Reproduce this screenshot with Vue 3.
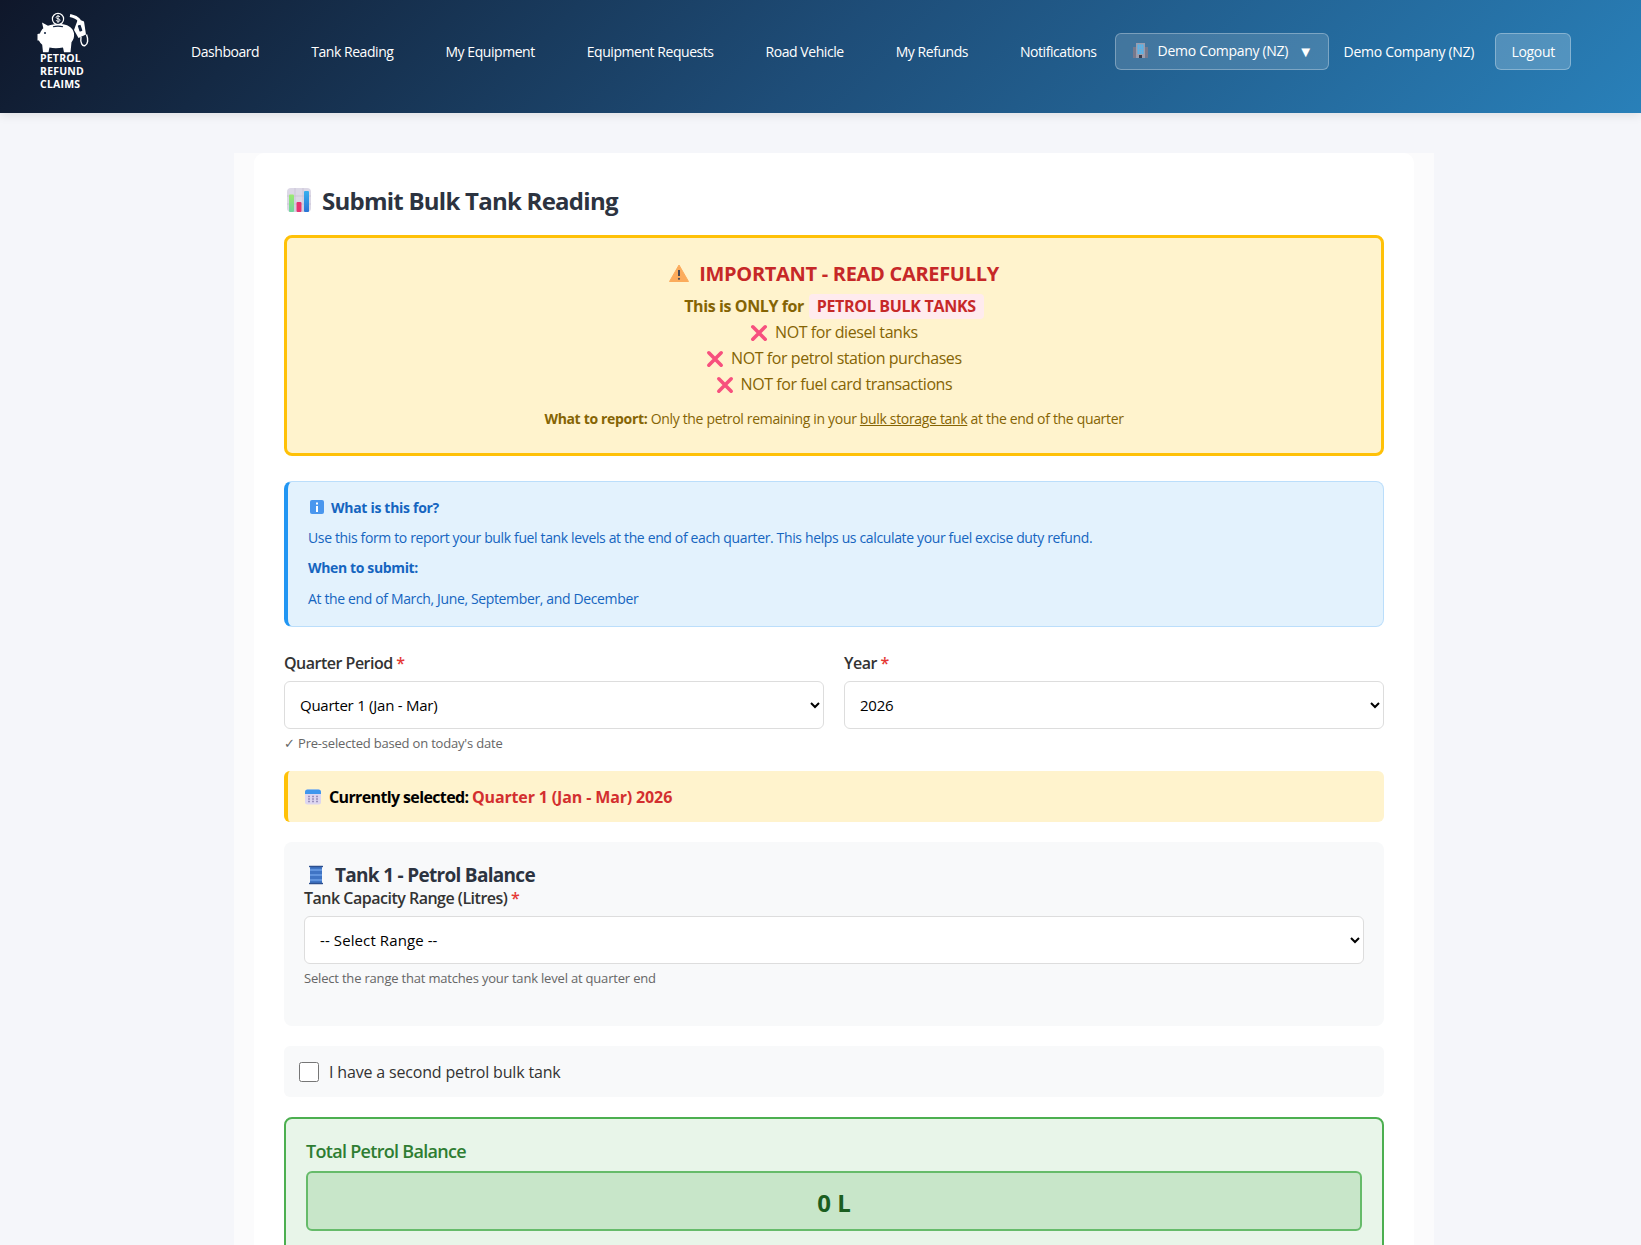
<script setup>
const navLinks = ['Dashboard', 'Tank Reading', 'My Equipment', 'Equipment Requests', 'Road Vehicle', 'My Refunds', 'Notifications'];
const notFor = ['NOT for diesel tanks', 'NOT for petrol station purchases', 'NOT for fuel card transactions'];
</script>

<template>
  <div class="page">
    <header class="topbar">
      <div class="brand">
        <svg class="logo" viewBox="0 0 52 42" width="52" height="42">
          <circle cx="21" cy="8" r="5.600" fill="none" stroke="#fff" stroke-width="1.200" />
          <path d="M23 5.800c-.7-1-3.900-1.100-3.900.6 0 1.900 4 .9 4 2.800 0 1.600-3.400 1.500-4.200-.2M21 3.900v8.200" fill="none" stroke="#fff" stroke-width=".9" />
          <path d="M5 11.500l6 3.300c4-1.600 10-2.200 15-1.600 6 .8 10 4 11 9 .5 3.500-.5 6.500-2.500 9l-1 10h-6.500l-1-4.600c-5 1-9.500 1-13.500 0l-1 4.600H6l-.8-7.400c-1.500-1.200-2.600-2.600-3.300-4.300H.5v-6.500l2.500-.5c.5-2 1.800-3.800 3.300-5.200z" fill="#fff" />
          <path d="M16 15.800c3-.8 7-.8 10 0" fill="none" stroke="#12233f" stroke-width="1.100" />
          <circle cx="8" cy="22" r="1" fill="#12233f" />
          <path d="M33 4.500c4 .8 7.500 2.500 9.500 5" fill="none" stroke="#fff" stroke-width="3" />
          <path d="M41 8l6 2.500 2 13-7.500 3.500-4.500-8z" fill="#fff" />
          <rect x="41.500" y="14" width="3" height="6.500" rx=".8" fill="#12233f" transform="rotate(-18 43 17)" />
          <path d="M44 26c-1 6 1.500 9.500 4 8.500 3-1.200 3.500-6 1.500-11" fill="none" stroke="#fff" stroke-width="1.400" />
        </svg>
        <div class="brand-text">PETROL<br />REFUND<br />CLAIMS</div>
      </div>
      <nav class="nav">
        <a v-for="link in navLinks" :key="link" class="nav-link">{{ link }}</a>
      </nav>
      <button class="company-btn">
        <svg class="office" viewBox="0 0 15 15" width="15" height="15">
          <rect x="0" y="4" width="15" height="11" fill="#77798c" />
          <rect x="3" y="0" width="9" height="15" fill="#9b9dae" />
          <rect x="4.500" y="1.500" width="6" height="9.500" fill="#4fb6ee" />
          <path d="M4.500 4h6M4.500 6.500h6M4.500 9h6M6.500 1.500V11M8.500 1.500V11" stroke="#8fa3c0" stroke-width=".5" />
          <rect x="6" y="12" width="3" height="3" fill="#3a3d4d" />
        </svg>
        <span class="company-label">Demo Company (NZ)</span>
        <span class="caret">▼</span>
      </button>
      <span class="company-name">Demo Company (NZ)</span>
      <button class="logout">Logout</button>
    </header>

    <main class="main">
      <div class="shell">
        <div class="card">
          <h1 class="title">
            <svg viewBox="0 0 24 24" width="24" height="24">
              <defs>
                <linearGradient id="barGreen" x1="0" y1="0" x2="0" y2="1"><stop offset="0" stop-color="#9bea6f" /><stop offset="1" stop-color="#6fd6a0" /></linearGradient>
                <linearGradient id="barBlue" x1="0" y1="0" x2="0" y2="1"><stop offset="0" stop-color="#35b0ee" /><stop offset="1" stop-color="#2a74d6" /></linearGradient>
              </defs>
              <rect width="24" height="24" rx="4" fill="#dcd8e6" />
              <path d="M8 0v24M16 0v24M0 8h24M0 16h24" stroke="#c4bed0" stroke-width=".6" />
              <rect x="2" y="6.500" width="5" height="17.500" rx="1" fill="url(#barGreen)" />
              <rect x="9.500" y="14" width="5" height="10" rx="1" fill="#e7336f" />
              <rect x="17" y="3" width="5" height="21" rx="1" fill="url(#barBlue)" />
            </svg>
            Submit Bulk Tank Reading
          </h1>

          <section class="warn">
            <h2 class="warn-title">
              <svg viewBox="0 0 20 18" width="20" height="18">
                <path d="M10 1L19.500 17.500H.5z" fill="#fbab5c" stroke="#fbab5c" stroke-linejoin="round" />
                <path d="M10 6v6" stroke="#4a4a55" stroke-width="2" />
                <circle cx="10" cy="14.800" r="1.100" fill="#4a4a55" />
              </svg>
              IMPORTANT - READ CAREFULLY
            </h2>
            <p class="warn-only">This is ONLY for <span class="tag">PETROL BULK TANKS</span></p>
            <p v-for="line in notFor" :key="line" class="warn-line">
              <svg viewBox="0 0 16 16" width="18" height="18">
                <path d="M2.500 2.500l11 11M13.500 2.500l-11 11" stroke="#f7507e" stroke-width="3.200" stroke-linecap="round" />
              </svg>
              {{ line }}
            </p>
            <p class="warn-report"><strong>What to report:</strong> Only the petrol remaining in your <u>bulk storage tank</u> at the end of the quarter</p>
          </section>

          <section class="info">
            <h3 class="info-title">
              <svg viewBox="0 0 14 14" width="14" height="14">
                <rect width="14" height="14" rx="2" fill="#4a97ee" />
                <rect x="6" y="6" width="2" height="6" fill="#fff" />
                <rect x="6" y="2.500" width="2" height="2" fill="#fff" />
              </svg>
              What is this for?
            </h3>
            <p>Use this form to report your bulk fuel tank levels at the end of each quarter. This helps us calculate your fuel excise duty refund.</p>
            <p><strong>When to submit:</strong></p>
            <p>At the end of March, June, September, and December</p>
          </section>

          <div class="row">
            <div class="field">
              <label class="label">Quarter Period <span class="req">*</span></label>
              <select class="select">
                <option>Quarter 1 (Jan - Mar)</option>
              </select>
              <small class="hint">✓ Pre-selected based on today's date</small>
            </div>
            <div class="field">
              <label class="label">Year <span class="req">*</span></label>
              <select class="select">
                <option>2026</option>
              </select>
            </div>
          </div>

          <div class="selected">
            <svg viewBox="0 0 16 16" width="16" height="16">
              <rect y="0.500" width="16" height="15" rx="2.500" fill="#ddd6f0" />
              <path d="M0 5V3a2.500 2.500 0 0 1 2.500-2.500h11A2.500 2.500 0 0 1 16 3v2z" fill="#3f97ee" />
              <path d="M3 7.500h2M7 7.500h2M11 7.500h2M3 10h2M7 10h2M11 10h2M3 12.500h2M7 12.500h2M11 12.500h2" stroke="#9a90bd" stroke-width="1.300" />
            </svg>
            <strong>Currently selected: <span class="selected-value">Quarter 1 (Jan - Mar) 2026</span></strong>
          </div>

          <section class="tank">
            <h3 class="tank-title">
              <svg viewBox="0 0 14 20" width="14" height="20">
                <rect x="1" y="1" width="12" height="18" rx="1.500" fill="#3f74c4" />
                <path d="M1 5h12M1 10h12M1 15h12" stroke="#6c9fe6" stroke-width="1.400" />
                <path d="M.5 1.500h13M.5 18.500h13" stroke="#2c4f8f" stroke-width="1.400" stroke-linecap="round" />
              </svg>
              Tank 1 - Petrol Balance
            </h3>
            <label class="label tank-label">Tank Capacity Range (Litres) <span class="req">*</span></label>
            <select class="select range">
              <option>-- Select Range --</option>
            </select>
            <small class="hint">Select the range that matches your tank level at quarter end</small>
          </section>

          <label class="second">
            <input type="checkbox" class="check" />
            <span>I have a second petrol bulk tank</span>
          </label>

          <section class="total">
            <div class="total-label">Total Petrol Balance</div>
            <div class="total-value">0 L</div>
          </section>
        </div>
      </div>
    </main>
  </div>
</template>

<style>
html, body { margin: 0; background: #f5f6fa; }
</style>

<style scoped>
* { box-sizing: border-box; }
.page {
  height: 100vh; overflow: hidden; background: #f5f6fa;
  font-family: "Open Sans", "Noto Sans", sans-serif; color: #333;
}
.topbar {
  height: 113px; display: flex; align-items: center; padding: 0 70px 10px 37px;
  background: linear-gradient(135deg, #0f172a 0%, #1e4d78 50%, #2980b9 100%);
  box-shadow: 0 2px 10px rgba(0,0,0,.1); color: #fff;
}
.brand { width: 154px; flex-shrink: 0; margin-bottom: 2px; }
.logo { display: block; }
.brand-text { font-size: 10.500px; font-weight: 700; line-height: 13px; margin: -1px 0 0 3px; letter-spacing: .2px; }
.nav { display: flex; gap: 52px; font-size: 14px; letter-spacing: -.45px; }
.nav-link { white-space: nowrap; }
.company-btn {
  margin-left: 18px; height: 37px; width: 214px; display: flex; align-items: center; gap: 10px; flex-shrink: 0;
  padding: 0 0 2px 17px; border: 1px solid rgba(255,255,255,.3); border-radius: 6px;
  background: rgba(255,255,255,.15); color: #fff; font: inherit; font-size: 14px; letter-spacing: -.3px;
}
.company-label { white-space: nowrap; }
.office { flex-shrink: 0; }
.caret { font-size: 15px; }
.company-name { margin-left: 15px; font-size: 14px; letter-spacing: -.3px; white-space: nowrap; }
.logout {
  margin-left: 21px; height: 37px; width: 76px; padding: 0; border: 1px solid rgba(255,255,255,.3); flex-shrink: 0;
  border-radius: 6px; background: rgba(255,255,255,.2); color: #fff; font: inherit; font-size: 14px; letter-spacing: -.3px;
}
.main { padding-top: 40px; }
.shell { width: 1200px; margin-left: 234px; padding: 0 20px; background: #fbfbfc; }
.card {
  height: 1400px; padding: 30px; background: #fff; border-radius: 10px;
}
.title { display: flex; align-items: center; gap: 11px; margin: 0 0 18px 3px; height: 34px; font-size: 24px; font-weight: 700; letter-spacing: -.75px; color: #2c3340; }
.warn {
  height: 221px; padding: 21px 20px 20px; text-align: center; background: #fff3cd;
  border: 3px solid #ffc107; border-radius: 8px; color: #856404; font-size: 16px;
}
.warn p { margin: 0; }
.warn-title {
  display: flex; justify-content: center; align-items: center; gap: 10px; margin: 0 0 6px; height: 28px;
  font-size: 20px; font-weight: 700; letter-spacing: -.3px; color: #c62828;
}
.warn-only { font-weight: 700; line-height: 26px; letter-spacing: -.4px; }
.tag { display: inline-block; padding: 0 8px; height: 25px; line-height: 25px; margin-left: 1px; background: #ffebee; border-radius: 4px; color: #c62828; letter-spacing: -.3px; }
.warn-line { line-height: 26px; letter-spacing: -.43px; }
.warn-line svg { vertical-align: -4px; margin-right: 3px; }
.warn-report { margin-top: 12px !important; font-size: 14px; letter-spacing: -.33px; }
.info {
  height: 146px; margin-top: 25px; padding: 15px 20px 0; background: #e3f2fd;
  border: 1px solid #bbdefb; border-left: 4px solid #2196f3; border-radius: 8px; color: #1565c0; font-size: 14px;
  letter-spacing: -.36px;
}
.info-title { display: flex; align-items: center; gap: 7px; margin: 0 0 10.500px 2px; font-size: 14px; font-weight: 700; height: 20px; letter-spacing: -.3px; }
.info p { margin: 0 0 10.500px; line-height: 20px; }
.row { display: grid; grid-template-columns: 1fr 1fr; gap: 20px; margin-top: 26px; }
.field { display: flex; flex-direction: column; align-items: stretch; }
.label { display: block; margin-bottom: 8px; height: 20px; line-height: 20px; font-size: 16px; font-weight: 600; letter-spacing: -.5px; color: #333; }
.req { color: #e53935; }
.select {
  width: 100%; height: 48px; padding: 0 11px; border: 1px solid #ddd; border-radius: 6px;
  background: #fff; color: #000; font: inherit; font-size: 15px; letter-spacing: -.25px;
}
.range { letter-spacing: .1px; }
.hint { display: block; margin-top: 6px; font-size: 13px; line-height: 17px; letter-spacing: -.19px; color: #666; }
.selected {
  display: flex; align-items: center; gap: 8px; height: 51px; margin-top: 19px; padding: 0 0 0 17px;
  background: #fff3cd; border-left: 4px solid #ffc107; border-radius: 6px; font-size: 16px; letter-spacing: -.63px; color: #000;
}
.selected-value { color: #d32f2f; letter-spacing: -.14px; }
.tank { height: 184px; margin-top: 20px; padding: 20px; background: #f8f9fa; border-radius: 8px; }
.tank-title { display: flex; align-items: center; gap: 12px; margin: 0 0 0 5px; height: 26px; font-size: 19px; font-weight: 700; letter-spacing: -.7px; color: #2c3340; }
.tank-label { margin-top: 0; }
.second {
  display: flex; align-items: center; gap: 10px; height: 51px; margin-top: 20px; padding: 0 15px;
  background: #f8f9fa; border-radius: 6px; font-size: 16px; font-weight: 500; letter-spacing: -.17px; color: #333;
}
.check { width: 20px; height: 20px; margin: 0; }
.total { margin-top: 20px; padding: 20px 20px 20px; height: 300px; background: #e8f5e9; border: 2px solid #4caf50; border-radius: 8px; }
.total-label { height: 32px; line-height: 24px; font-size: 18px; font-weight: 600; letter-spacing: -.7px; color: #2e7d32; }
.total-value {
  height: 60px; line-height: 60px; text-align: center; background: #c8e6c9; border: 2px solid #66bb6a; border-radius: 6px;
  font-size: 24px; font-weight: 700; color: #1b5e20;
}
</style>
